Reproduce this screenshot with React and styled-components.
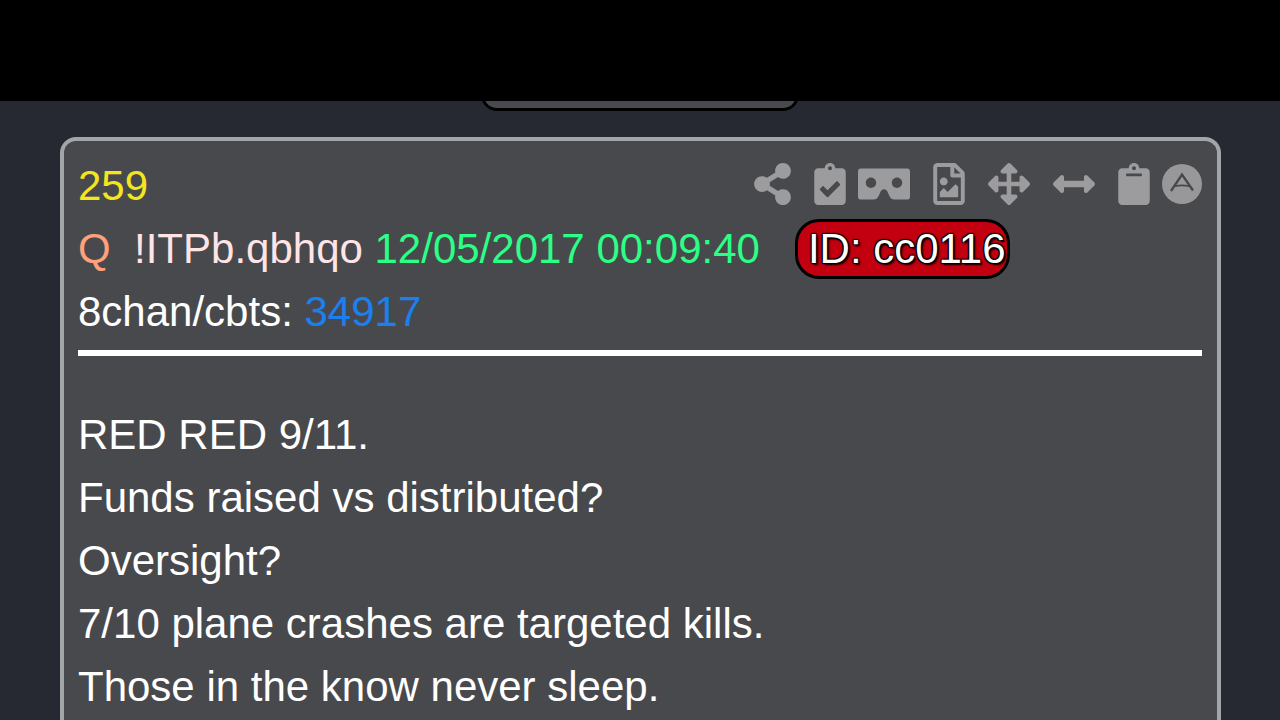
import React from 'react';
import styled, { createGlobalStyle } from 'styled-components';
import {
  FaShareAlt,
  FaClipboardCheck,
  FaVrCardboard,
  FaRegFileImage,
  FaArrowsAlt,
  FaArrowsAltH,
  FaClipboard,
} from 'react-icons/fa';

const lines = [
  'RED RED 9/11.',
  'Funds raised vs distributed?',
  'Oversight?',
  '7/10 plane crashes are targeted kills.',
  'Those in the know never sleep.',
];

const actions = [
  { label: 'Share', icon: FaShareAlt, width: 37 },
  { label: 'Copy checked', icon: FaClipboardCheck, width: 32, apart: true },
  { label: 'Viewer', icon: FaVrCardboard, width: 52 },
  { label: 'Save as image', icon: FaRegFileImage, width: 32, apart: true },
  { label: 'Expand', icon: FaArrowsAlt, width: 42, apart: true },
  { label: 'Widen', icon: FaArrowsAltH, width: 42, apart: true },
  { label: 'Copy', icon: FaClipboard, width: 32, apart: true },
];

const ArchiveIcon = () => (
  <svg viewBox="0 0 40 40" aria-hidden="true">
    <circle cx="20" cy="20" r="20" fill="#98989a" />
    <path
      d="M9 27 L20 10.5 L31 26.5"
      fill="none"
      stroke="#47484c"
      strokeWidth="2.3"
    />
    <path d="M13 22.2 Q20 20.6 27 22.2" fill="none" stroke="#47484c" strokeWidth="1.6" />
  </svg>
);

const App = () => {
  return (
    <Page>
      <GlobalStyle />
      <TopBar />
      <TabStrip>
        <Tab />
      </TabStrip>

      <PostCard>
        <PostHeader>
          <HeaderRow>
            <PostNumber>259</PostNumber>
            <Actions>
              {actions.map(({ label, icon: Icon, width, apart }) => (
                <ActionButton key={label} aria-label={label} $width={width} $apart={apart}>
                  <Icon />
                </ActionButton>
              ))}
              <ActionButton aria-label="Archive" $width={40}>
                <ArchiveIcon />
              </ActionButton>
            </Actions>
          </HeaderRow>
          <HeaderRow>
            <div>
              <Name>Q</Name>&nbsp; <Trip>!ITPb.qbhqo</Trip> <Time>12/05/2017 00:09:40</Time>
            </div>
            <UserId>ID: cc0116</UserId>
          </HeaderRow>
          <div>
            8chan/cbts: <PostLink href="#34917">34917</PostLink>
          </div>
        </PostHeader>
        <Divider />
        <PostBody>
          {lines.map((line) => (
            <p key={line}>{line}</p>
          ))}
        </PostBody>
      </PostCard>
    </Page>
  );
};

export default App;

const GlobalStyle = createGlobalStyle`
  * {
    box-sizing: border-box;
  }
  body {
    margin: 0;
    background-color: #262931;
    color: #fff;
    font-family: "Liberation Sans", Arial, sans-serif;
    font-size: 42px;
    line-height: 63px;
  }
  p {
    margin: 0;
  }
`;

const Page = styled.main`
  display: flex;
  flex-direction: column;
  min-height: 100vh;
`;

const TopBar = styled.div`
  height: 101px;
  background-color: #000;
`;

const TabStrip = styled.div`
  display: flex;
  justify-content: center;
  align-items: flex-end;
  height: 10px;
  overflow: hidden;
`;

const Tab = styled.div`
  flex-shrink: 0;
  width: 318px;
  height: 48px;
  border: 3px solid #000;
  border-radius: 16px;
  background-color: #4a494f;
`;

const PostCard = styled.article`
  flex: 1;
  margin: 26px 59px 0 60px;
  padding: 13px 15px 0 14px;
  border: 4px solid #a4a5a9;
  border-bottom: none;
  border-radius: 16px 16px 0 0;
  background-color: #48494d;
`;

const PostHeader = styled.header`
  white-space: nowrap;
`;

const HeaderRow = styled.div`
  display: flex;
  align-items: center;
  height: 63px;
`;

const PostNumber = styled.span`
  color: #f5e51f;
`;

const Actions = styled.div`
  display: flex;
  align-items: center;
  gap: 12px;
  margin-left: auto;
  padding-bottom: 4px;
`;

const ActionButton = styled.button`
  display: flex;
  width: ${({ $width }) => $width}px;
  margin: 0 0 0 ${({ $apart }) => ($apart ? 11 : 0)}px;
  padding: 0;
  border: none;
  background: none;
  color: #9c9c9e;
  cursor: pointer;

  svg {
    width: 100%;
    height: 42px;
  }
`;

const Name = styled.span`
  color: #ffa07a;
`;

const Trip = styled.span`
  color: #ffe4e6;
`;

const Time = styled.time`
  color: #2bff85;
`;

const UserId = styled.span`
  margin-left: 35px;
  padding: 0 1px 0 10px;
  border: 3px solid #000;
  border-radius: 24px;
  background-color: #c2000f;
  line-height: 54px;
  text-shadow:
    2px 2px 2px #000,
    -1px -1px 1px #000,
    1px -1px 1px #000,
    -1px 1px 1px #000;
`;

const PostLink = styled.a`
  color: #1a80f0;
  text-decoration: none;
`;

const Divider = styled.hr`
  height: 6px;
  margin: 7px 0 47px;
  border: none;
  background-color: #fff;
`;

const PostBody = styled.section`
  overflow-wrap: break-word;
`;
